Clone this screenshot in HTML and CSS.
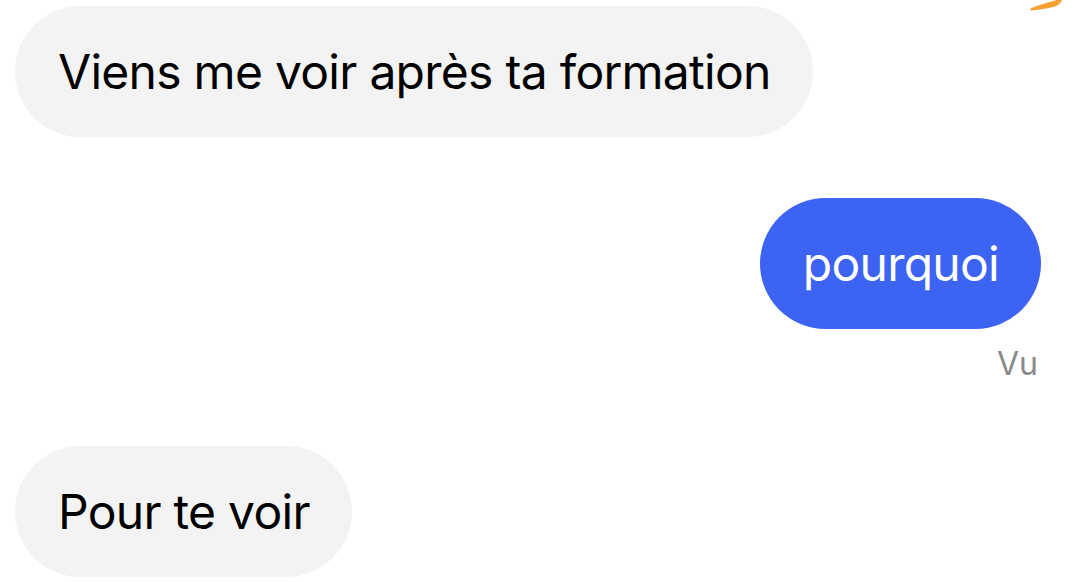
FILE: index.html
```html
<!DOCTYPE html>
<html lang="fr">
<head>
<meta charset="utf-8">
<link rel="stylesheet" href="styles.css">
</head>
<body>
<div class="chat">
  <svg class="corner" width="44" height="14" viewBox="0 0 44 14">
    <path d="M10 9 C16 5.5 26 3 34 1 L36 0 L42 0 C41 3 39 5 35 6.5 C27 8.5 19 10 11 10.5 Z" fill="#f5a030"/>
  </svg>
  <div class="row in"><div class="bubble gray">Viens me voir après ta formation</div></div>
  <div class="row out"><div class="bubble blue">pourquoi</div></div>
  <div class="seen">Vu</div>
  <div class="row in last"><div class="bubble gray">Pour te voir</div></div>
</div>
</body>
</html>
```
FILE: styles.css
```css
html, body {
  margin: 0;
  padding: 0;
  background: #ffffff;
}
.chat {
  position: relative;
  width: 1077px;
  height: 582px;
  box-sizing: border-box;
  padding: 6px 36px 0 15px;
  display: flex;
  flex-direction: column;
  font-family: Inter, "Liberation Sans", sans-serif;
  overflow: hidden;
}
.corner {
  position: absolute;
  top: 0;
  right: 13px;
}
.row {
  display: flex;
}
.row.in { justify-content: flex-start; }
.row.out { justify-content: flex-end; margin-top: 61px; }
.row.last { margin-top: 62px; }
.bubble {
  height: 131px;
  box-sizing: border-box;
  padding: 0 42px 0 43px;
  border-radius: 66px;
  display: flex;
  align-items: center;
  font-size: 48px;
  letter-spacing: -0.72px;
}
.gray {
  background: #f3f3f3;
  color: #000000;
}
.blue {
  background: #3c63f2;
  color: #ffffff;
}
.seen {
  align-self: flex-end;
  margin-right: 3px;
  margin-top: 15px;
  font-size: 32px;
  line-height: 40px;
  color: #8a8a8a;
}
```
